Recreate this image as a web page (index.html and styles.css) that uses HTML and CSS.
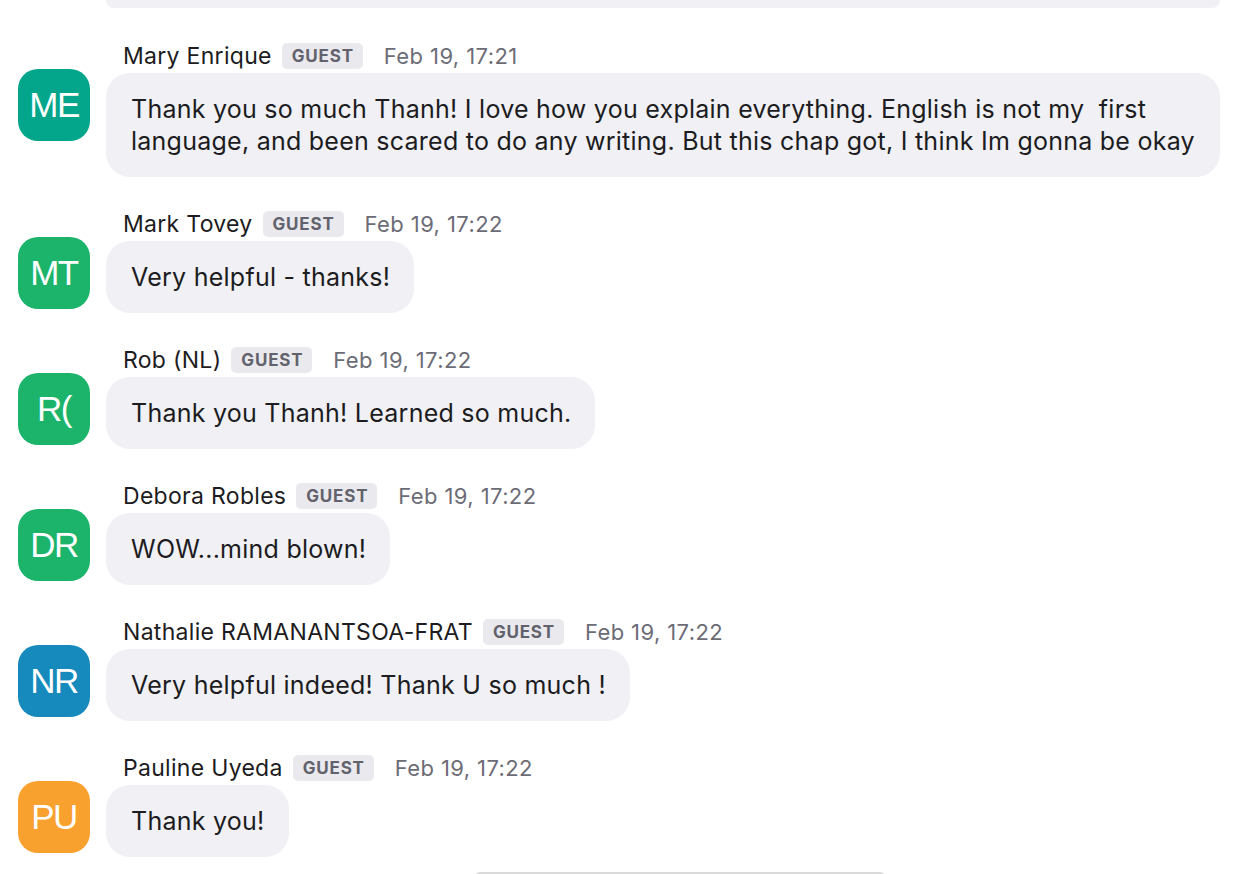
FILE: index.html
```html
<!DOCTYPE html>
<html>
<head>
<meta charset="utf-8">
<link rel="stylesheet" href="styles.css">
</head>
<body>
<div class="feed">
  <div class="prev-bubble"></div>

  <div class="msg">
    <div class="avatar c-teal">ME</div>
    <div class="content">
      <div class="head"><span class="name">Mary Enrique</span><span class="badge">GUEST</span><span class="time">Feb 19, 17:21</span></div>
      <div class="bubble">Thank you so much Thanh! I love how you explain everything. English is not my&nbsp; first language, and been scared to do any writing. But this chap got, I think Im gonna be okay</div>
    </div>
  </div>

  <div class="msg">
    <div class="avatar c-green">MT</div>
    <div class="content">
      <div class="head"><span class="name">Mark Tovey</span><span class="badge">GUEST</span><span class="time">Feb 19, 17:22</span></div>
      <div class="bubble">Very helpful - thanks!</div>
    </div>
  </div>

  <div class="msg">
    <div class="avatar c-green">R(</div>
    <div class="content">
      <div class="head"><span class="name">Rob (NL)</span><span class="badge">GUEST</span><span class="time">Feb 19, 17:22</span></div>
      <div class="bubble">Thank you Thanh! Learned so much.</div>
    </div>
  </div>

  <div class="msg">
    <div class="avatar c-green">DR</div>
    <div class="content">
      <div class="head"><span class="name">Debora Robles</span><span class="badge">GUEST</span><span class="time">Feb 19, 17:22</span></div>
      <div class="bubble">WOW...mind blown!</div>
    </div>
  </div>

  <div class="msg">
    <div class="avatar c-blue">NR</div>
    <div class="content">
      <div class="head"><span class="name">Nathalie RAMANANTSOA-FRAT</span><span class="badge">GUEST</span><span class="time">Feb 19, 17:22</span></div>
      <div class="bubble">Very helpful indeed! Thank U so much !</div>
    </div>
  </div>

  <div class="msg">
    <div class="avatar c-orange">PU</div>
    <div class="content">
      <div class="head"><span class="name">Pauline Uyeda</span><span class="badge">GUEST</span><span class="time">Feb 19, 17:22</span></div>
      <div class="bubble">Thank you!</div>
    </div>
  </div>
</div>
<div class="pill"></div>
</body>
</html>
```
FILE: styles.css
```css
html, body {
  margin: 0;
  padding: 0;
  background: #ffffff;
  height: 874px;
  overflow: hidden;
}
body {
  font-family: Inter, "Noto Sans", sans-serif;
  color: #1c1c21;
  position: relative;
}
.feed {
  display: flex;
  flex-direction: column;
  gap: 34px;
  padding: 0 24px 0 18px;
}
.prev-bubble {
  margin-left: 88px;
  height: 8px;
  background: #f0f0f5;
  border-radius: 0 0 24px 24px;
  margin-bottom: 1px;
}
.msg {
  display: flex;
  align-items: flex-start;
  gap: 16px;
}
.avatar {
  flex: 0 0 72px;
  width: 72px;
  height: 72px;
  margin-top: 26px;
  border-radius: 20px;
  color: #ffffff;
  font-family: "Liberation Sans", Arial, sans-serif;
  font-size: 35px;
  display: flex;
  align-items: center;
  justify-content: center;
  letter-spacing: -1.5px;
}
.c-teal { background: #03a68a; }
.c-green { background: #1cb46b; }
.c-blue { background: #1689bd; }
.c-orange { background: #f9a12e; }
.content {
  display: flex;
  flex-direction: column;
  align-items: flex-start;
  gap: 4px;
  min-width: 0;
}
.head {
  display: flex;
  align-items: center;
  height: 26px;
  padding-left: 17px;
}
.name {
  font-size: 23px;
  color: #1c1c21;
  letter-spacing: 0.3px;
}
.badge {
  margin-left: 10px;
  background: #e9e9ee;
  color: #62626c;
  font-weight: 700;
  font-size: 17px;
  letter-spacing: 0.8px;
  height: 26px;
  line-height: 26px;
  padding: 0 9px 0 10px;
  border-radius: 5px;
}
.time {
  margin-left: 21px;
  font-size: 22px;
  color: #6c6c76;
  letter-spacing: 0.4px;
}
.bubble {
  background: #f0f0f5;
  border-radius: 24px;
  padding: 20px 24px 20px 25px;
  font-size: 25px;
  line-height: 32px;
  color: #1c1c21;
  letter-spacing: 0.25px;
}
.pill {
  position: absolute;
  left: 474px;
  top: 872px;
  width: 412px;
  height: 10px;
  border-top: 2px solid #dadada;
  border-radius: 6px 6px 0 0;
  background: #ffffff;
}
```
